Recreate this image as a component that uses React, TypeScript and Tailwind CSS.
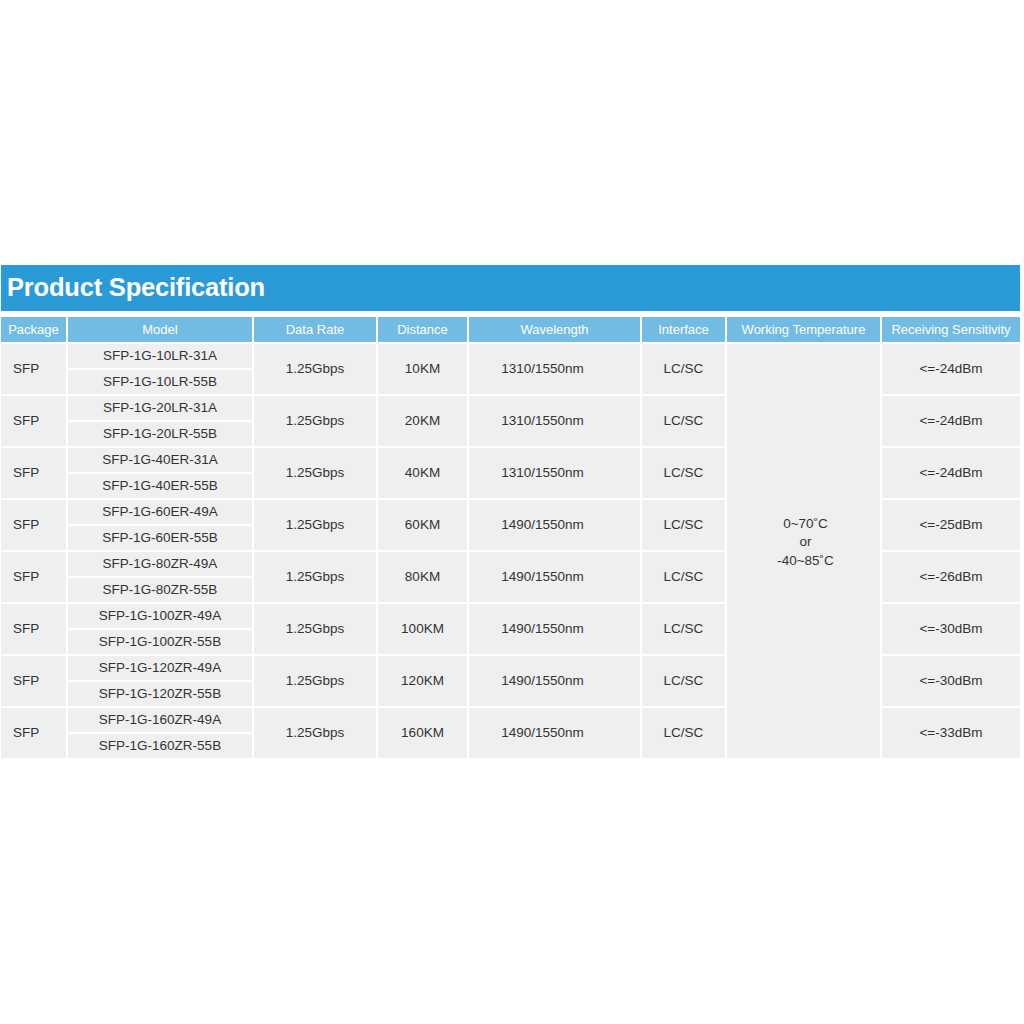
import React from "react";

interface SpecRow {
  models: [string, string];
  rate: string;
  distance: string;
  wavelength: string;
  iface: string;
  sensitivity: string;
}

const ROWS: SpecRow[] = [
  { models: ["SFP-1G-10LR-31A", "SFP-1G-10LR-55B"], rate: "1.25Gbps", distance: "10KM", wavelength: "1310/1550nm", iface: "LC/SC", sensitivity: "<=-24dBm" },
  { models: ["SFP-1G-20LR-31A", "SFP-1G-20LR-55B"], rate: "1.25Gbps", distance: "20KM", wavelength: "1310/1550nm", iface: "LC/SC", sensitivity: "<=-24dBm" },
  { models: ["SFP-1G-40ER-31A", "SFP-1G-40ER-55B"], rate: "1.25Gbps", distance: "40KM", wavelength: "1310/1550nm", iface: "LC/SC", sensitivity: "<=-24dBm" },
  { models: ["SFP-1G-60ER-49A", "SFP-1G-60ER-55B"], rate: "1.25Gbps", distance: "60KM", wavelength: "1490/1550nm", iface: "LC/SC", sensitivity: "<=-25dBm" },
  { models: ["SFP-1G-80ZR-49A", "SFP-1G-80ZR-55B"], rate: "1.25Gbps", distance: "80KM", wavelength: "1490/1550nm", iface: "LC/SC", sensitivity: "<=-26dBm" },
  { models: ["SFP-1G-100ZR-49A", "SFP-1G-100ZR-55B"], rate: "1.25Gbps", distance: "100KM", wavelength: "1490/1550nm", iface: "LC/SC", sensitivity: "<=-30dBm" },
  { models: ["SFP-1G-120ZR-49A", "SFP-1G-120ZR-55B"], rate: "1.25Gbps", distance: "120KM", wavelength: "1490/1550nm", iface: "LC/SC", sensitivity: "<=-30dBm" },
  { models: ["SFP-1G-160ZR-49A", "SFP-1G-160ZR-55B"], rate: "1.25Gbps", distance: "160KM", wavelength: "1490/1550nm", iface: "LC/SC", sensitivity: "<=-33dBm" },
];

const HEADERS = [
  "Package",
  "Model",
  "Data Rate",
  "Distance",
  "Wavelength",
  "Interface",
  "Working Temperature",
  "Receiving Sensitivity",
];

const cell = "bg-[#efefef] flex items-center justify-center";

function GroupRow({ row }: { row: SpecRow }) {
  return (
    <div className="grid gap-[2px] grid-cols-[65px_184px_122px_89px_171px_83px] grid-rows-[24px_24px]">
      <div className={`${cell} justify-start pl-[12px] col-start-1 row-span-2`}>SFP</div>
      <div className={`${cell} col-start-2 row-start-1`}>{row.models[0]}</div>
      <div className={`${cell} col-start-2 row-start-2`}>{row.models[1]}</div>
      <div className={`${cell} col-start-3 row-start-1 row-span-2`}>{row.rate}</div>
      <div className={`${cell} col-start-4 row-start-1 row-span-2`}>{row.distance}</div>
      <div className={`${cell} col-start-5 row-start-1 row-span-2 pr-[24px]`}>{row.wavelength}</div>
      <div className={`${cell} col-start-6 row-start-1 row-span-2`}>{row.iface}</div>
    </div>
  );
}

export default function App() {
  return (
    <div className="min-h-[1024px] bg-white pt-[265px] pl-[1px] pr-[4px] text-[#333333] font-['Liberation_Sans',Arial,sans-serif]">
      {/* Title bar */}
      <div className="h-[46px] bg-[#2b9bd8] flex items-center pl-[6px]">
        <h1 className="text-white font-bold text-[25.5px] leading-none tracking-[-0.2px]">
          Product Specification
        </h1>
      </div>

      {/* Header row */}
      <div className="mt-[6px] grid gap-[2px] grid-cols-[65px_184px_122px_89px_171px_83px_153px_138px] h-[25px] text-[13px] leading-none">
        {HEADERS.map((h) => (
          <div key={h} className="bg-[#72bbe3] text-white flex items-center justify-center whitespace-nowrap">
            {h}
          </div>
        ))}
      </div>

      {/* Body */}
      <div className="mt-[2px] flex gap-[2px] text-[13.5px] leading-none">
        <div className="flex flex-col gap-[2px]">
          {ROWS.map((r) => (
            <GroupRow key={r.models[0]} row={r} />
          ))}
        </div>

        <div className={`${cell} w-[153px] flex-col gap-[5px] pb-[18px] pl-[4px]`}>
          <span>0~70˚C</span>
          <span>or</span>
          <span>-40~85˚C</span>
        </div>

        <div className="w-[138px] flex flex-col gap-[2px]">
          {ROWS.map((r) => (
            <div key={r.models[0]} className={`${cell} h-[50px]`}>
              {r.sensitivity}
            </div>
          ))}
        </div>
      </div>
    </div>
  );
}
